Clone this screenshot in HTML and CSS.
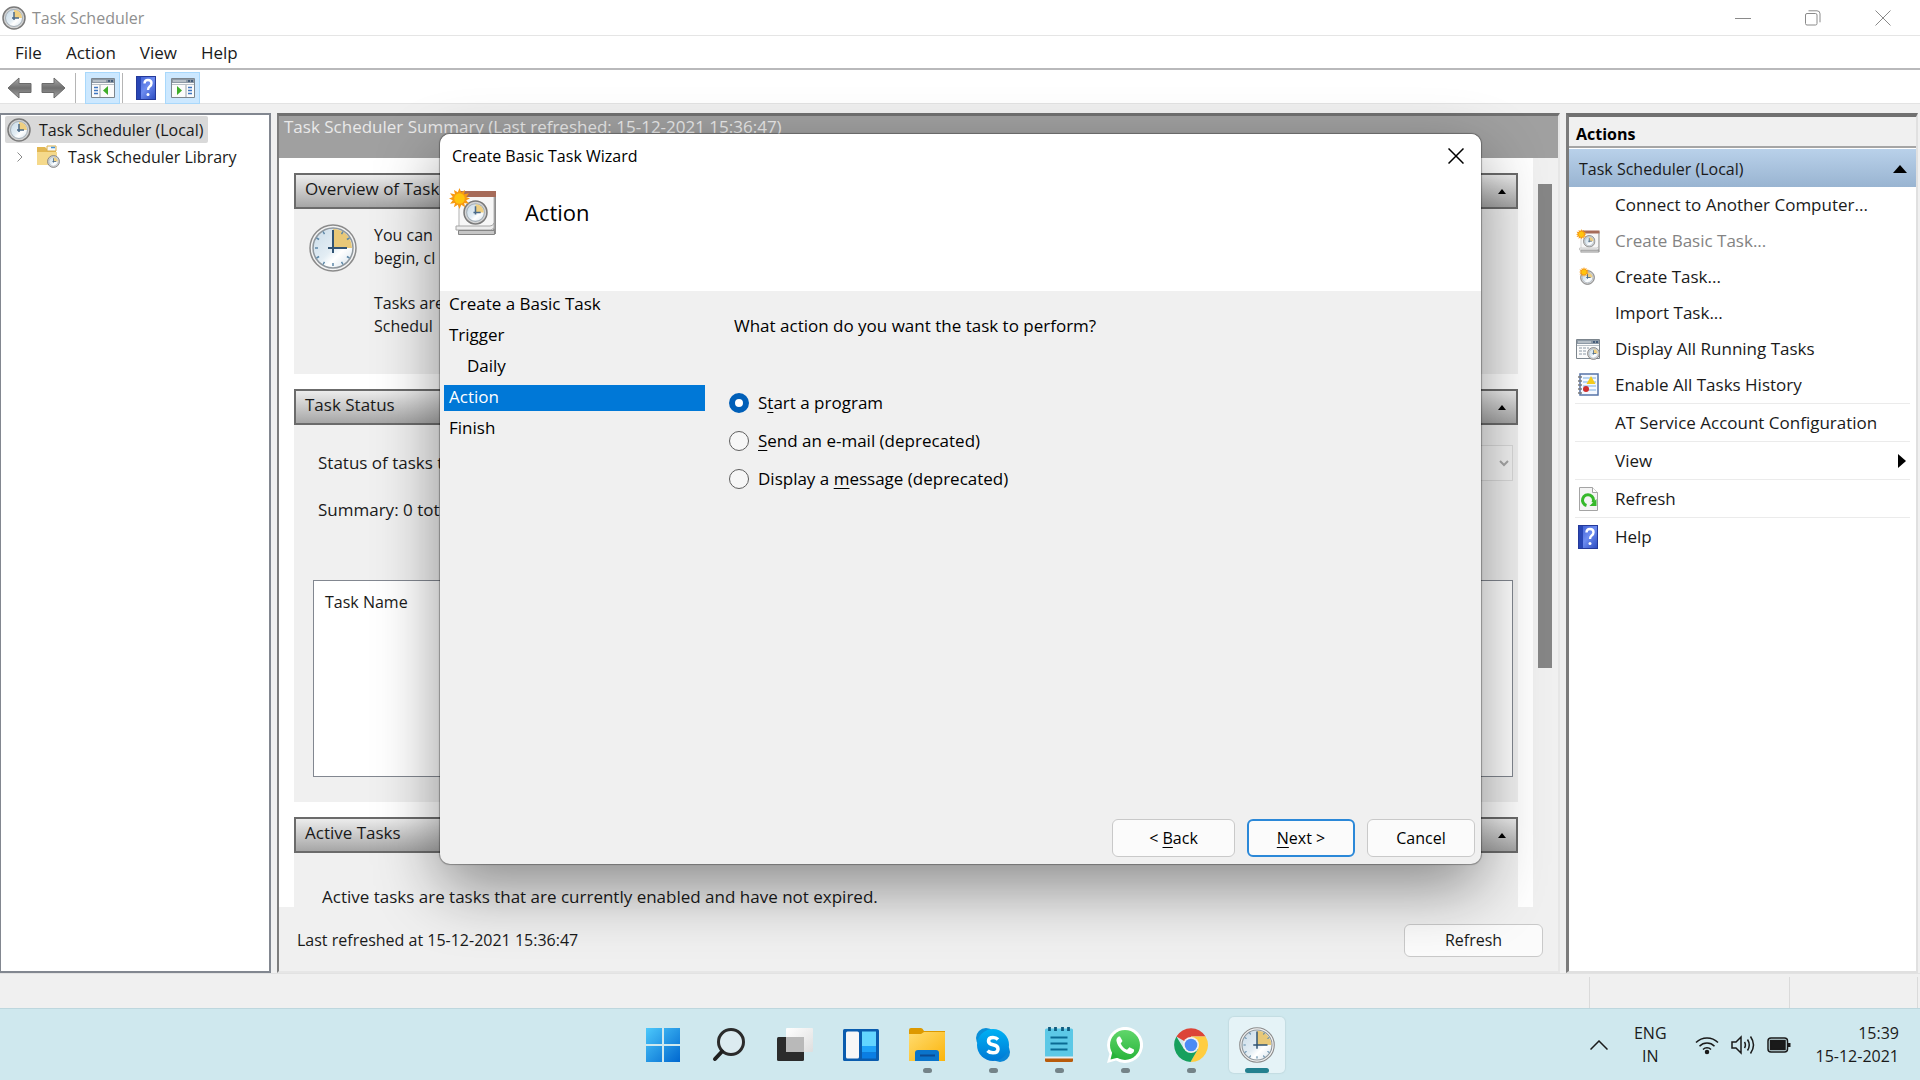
FILE: index.html
```html
<!DOCTYPE html>
<html lang="en">
<head>
    <meta charset="UTF-8">
    <meta name="viewport" content="width=device-width, initial-scale=1.0">
    <title>Task Scheduler</title>
    <link rel="stylesheet" href="styles.css">
</head>
<body>

    <!-- Shared icons -->
    <svg class="sprite" aria-hidden="true">
        <defs>
            <linearGradient id="face" x1="0" y1="0" x2="1" y2="1">
                <stop offset="0" stop-color="#c9dbe8"/>
                <stop offset=".5" stop-color="#e3edf4"/>
                <stop offset=".65" stop-color="#ffffff"/>
                <stop offset="1" stop-color="#d3e1eb"/>
            </linearGradient>
            <linearGradient id="arrowFill" x1="0" y1="0" x2="0" y2="1">
                <stop offset="0" stop-color="#a9a9a9"/>
                <stop offset=".5" stop-color="#6f6f6f"/>
                <stop offset="1" stop-color="#a4a4a4"/>
            </linearGradient>
            <linearGradient id="blueFill" x1="0" y1="0" x2="1" y2="1">
                <stop offset="0" stop-color="#4cc8fb"/>
                <stop offset="1" stop-color="#0067cf"/>
            </linearGradient>
            <linearGradient id="bookFill" x1="0" y1="0" x2="1" y2="1">
                <stop offset="0" stop-color="#3a5bd0"/>
                <stop offset=".5" stop-color="#6d8cf0"/>
                <stop offset="1" stop-color="#2d4ec2"/>
            </linearGradient>
            <linearGradient id="folderFill" x1="0" y1="0" x2="1" y2="1">
                <stop offset="0" stop-color="#ffdc70"/>
                <stop offset="1" stop-color="#fbb40b"/>
            </linearGradient>
            <linearGradient id="skypeFill" x1="0" y1="0" x2="0" y2="1">
                <stop offset="0" stop-color="#00b1f4"/>
                <stop offset="1" stop-color="#0078d4"/>
            </linearGradient>
            <linearGradient id="greenFill" x1="0" y1="0" x2="0" y2="1">
                <stop offset="0" stop-color="#60d66a"/>
                <stop offset="1" stop-color="#28b43b"/>
            </linearGradient>
            <linearGradient id="paneFill" x1="0" y1="0" x2="1" y2="1">
                <stop offset="0" stop-color="#ffffff"/>
                <stop offset="1" stop-color="#dedede"/>
            </linearGradient>
        </defs>
        <symbol id="clock" viewBox="0 0 48 48">
            <circle cx="24" cy="24" r="23" fill="#f4f4f4" stroke="#8b8b8b" stroke-width="1.5"/>
            <circle cx="24" cy="24" r="20" fill="url(#face)" stroke="#8f979d" stroke-width="1.5"/>
            <path d="M24 24V5A19 19 0 0 1 43 24Z" fill="#e8c878"/>
            <g stroke="#5d88a8" stroke-width="1.5">
                <path d="M24 39v3M6 24h3M14 7.500l1.500 2.600M7.500 14l2.600 1.500M7.500 34l2.600-1.500M14 40.500l1.500-2.600M34 40.500l-1.500-2.600M40.500 34l-2.600-1.500M34 7.500l-1.500 2.600M40.500 14l-2.600 1.500"/>
            </g>
            <path d="M24 6v23M19 24h19" stroke="#315474" stroke-width="2"/>
        </symbol>
        <symbol id="clock-small" viewBox="0 0 24 24">
            <circle cx="12" cy="12" r="11" fill="#d4d4d4" stroke="#7a7a7a" stroke-width="1.500"/>
            <circle cx="12" cy="12" r="8.500" fill="url(#face)" stroke="#a3aeb7"/>
            <path d="M12 12V4a8 8 0 0 1 8 8Z" fill="#efcf80"/>
            <path d="M12 6v8M10 12h7" stroke="#4a6a88" stroke-width="1.500"/>
        </symbol>
        <symbol id="sun" viewBox="0 0 20 20">
            <path d="M10 0l1.600 4 3.700-2.200-1 4.100L19 5l-2.600 3.600L20 10l-3.600 1.600L19 15l-4.600-.8 1 4.200-3.700-2.400L10 20l-1.600-4-3.700 2.400 1-4.200L1 15l2.600-3.400L0 10l3.600-1.400L1 5l4.700.9-1-4.100L8.400 4Z" fill="#f79a12"/>
            <circle cx="10" cy="10" r="5" fill="#ffc40d"/>
        </symbol>
        <symbol id="wizard" viewBox="0 0 48 48">
            <path d="M10 5h37v41H10Z" fill="#8d8d8d"/>
            <path d="M10 4h35v36l-2 3H9Z" fill="#f7f7f7"/>
            <path d="M10 3h37v6H10Z" fill="#a66b59"/>
            <path d="M10 4v36M45 9v32" stroke="#b5b5b5"/>
            <path d="M7 38h34q3 0 4-3v5l-3 2H7Z" fill="#ededed" stroke="#a5a5a5"/>
            <path d="M9.500 42.500h36v4h-36Z" fill="#c6c6c6" stroke="#858585"/>
            <use href="#clock-small" x="14" y="12" width="25" height="25"/>
            <use href="#sun" x="0" y="0" width="21" height="21"/>
        </symbol>
        <symbol id="help" viewBox="0 0 20 24">
            <path d="M0 0h20v24H0Z" fill="#24399a"/>
            <path d="M1 1h18v22H1Z" fill="url(#bookFill)"/>
            <path d="M1 1h4v22H1Z" fill="#2846b5"/>
            <path d="M8.500 7.500q0-3.500 3.500-3.500t3.500 3.300q0 1.900-1.800 3.200-1.700 1.200-1.700 3.500" fill="none" stroke="#ffffff" stroke-width="2.400"/>
            <circle cx="12" cy="18.500" r="1.500" fill="#ffffff"/>
        </symbol>
        <symbol id="window" viewBox="0 0 24 20">
            <path d="M.5.5h23v19H.5Z" fill="#fbfbfb" stroke="#7c858d"/>
            <path d="M1 1h22v4H1Z" fill="#8d99a5"/>
            <path d="M2 3h13" stroke="#dfe4e8"/>
            <path d="M17 3h2M20 3h2" stroke="#2f4a6c" stroke-width="1.500"/>
            <path d="M1 6.500h22" stroke="#b8bfc6"/>
        </symbol>
        <symbol id="back" viewBox="0 0 25 22">
            <path d="M1 11 12 1v5.500h12v9H12V21Z" fill="url(#arrowFill)" stroke="#6b6b6b" stroke-linejoin="round"/>
        </symbol>
    </svg>

    <header class="titlebar">
        <svg class="titlebar-icon"><use href="#clock-small"/></svg>
        <h1>Task Scheduler</h1>
        <div class="window-buttons">
            <button aria-label="Minimize"><svg viewBox="0 0 16 16"><path d="M0 8.500h16"/></svg></button>
            <button aria-label="Restore"><svg viewBox="0 0 16 16"><rect x=".5" y="3.500" width="11.500" height="11.500" rx="1.500"/><path d="M3.500.8h8.500a3 3 0 0 1 3 3v8.500"/></svg></button>
            <button aria-label="Close"><svg viewBox="0 0 16 16"><path d="M.5.5l15 15M15.500.5l-15 15"/></svg></button>
        </div>
    </header>

    <nav class="menubar">
        <button>File</button>
        <button>Action</button>
        <button>View</button>
        <button>Help</button>
    </nav>

    <div class="toolbar">
        <button aria-label="Back"><svg class="arrow"><use href="#back"/></svg></button>
        <button aria-label="Forward"><svg class="arrow flip"><use href="#back"/></svg></button>
        <span class="separator"></span>
        <button class="toggled" aria-label="Show or hide console tree">
            <svg viewBox="0 0 24 20" width="24" height="20"><use href="#window"/><path d="M9 7v12" stroke="#9aa3ab"/><path d="M3 9.500h4M3 12.500h4M3 15.500h4" stroke="#3f76c0" stroke-width="1.500"/><path d="M17 8v9l-5-4.500Z" fill="#3fae29"/></svg>
        </button>
        <span class="separator close"></span>
        <button aria-label="Help"><svg class="book"><use href="#help"/></svg></button>
        <button class="toggled" aria-label="Show or hide action pane">
            <svg viewBox="0 0 24 20" width="24" height="20"><use href="#window"/><path d="M15 7v12" stroke="#9aa3ab"/><path d="M17 9.500h4M17 12.500h4M17 15.500h4" stroke="#3f76c0" stroke-width="1.500"/><path d="M6 8v9l5-4.500Z" fill="#3fae29"/></svg>
        </button>
    </div>

    <main class="console">
        <ul class="tree">
            <li class="tree-root"><svg class="icon"><use href="#clock-small"/></svg><span>Task Scheduler (Local)</span></li>
            <li class="tree-child">
                <svg class="chevron" viewBox="0 0 6 10"><path d="M.5.5 5 5 .5 9.500"/></svg>
                <svg class="icon" viewBox="0 0 24 24">
                    <path d="M1 2h8l2 2h9v16H1Z" fill="#e2b752"/>
                    <path d="M11 1h9v5h-9Z" fill="#f8f8f8" stroke="#d9ae4b"/>
                    <path d="M15 2.500h4" stroke="#4192d9" stroke-width="1.500"/>
                    <path d="M1 7h20v13H1Z" fill="#f5d98b"/>
                    <use href="#clock-small" x="11" y="10" width="13" height="13"/>
                </svg>
                <span>Task Scheduler Library</span>
            </li>
        </ul>

        <section class="summary">
            <h2 class="summary-title">Task Scheduler Summary (Last refreshed: 15-12-2021 15:36:47)</h2>
            <div class="scroll-area">
                <div class="groups">
                    <section class="group">
                        <h3>Overview of Task <span class="collapse"></span></h3>
                        <div class="group-body overview">
                            <svg class="large-icon"><use href="#clock"/></svg>
                            <div class="overview-text">
                                <p>You can<br>begin, cl</p>
                                <p>Tasks are<br>Schedul</p>
                            </div>
                        </div>
                    </section>
                    <section class="group">
                        <h3>Task Status <span class="collapse"></span></h3>
                        <div class="group-body status">
                            <div class="status-row">
                                <label for="period">Status of tasks t</label>
                                <select id="period" disabled><option></option></select>
                            </div>
                            <p class="status-summary">Summary: 0 tot</p>
                            <div class="task-list">
                                <table>
                                    <thead><tr><th>Task Name</th></tr></thead>
                                </table>
                            </div>
                        </div>
                    </section>
                    <section class="group">
                        <h3>Active Tasks <span class="collapse"></span></h3>
                        <div class="group-body active-tasks">
                            <p>Active tasks are tasks that are currently enabled and have not expired.</p>
                        </div>
                    </section>
                </div>
                <div class="scrollbar"><div class="thumb"></div></div>
            </div>
            <footer class="summary-footer">
                <span>Last refreshed at 15-12-2021 15:36:47</span>
                <button class="button">Refresh</button>
            </footer>
        </section>

        <aside class="actions">
            <h2>Actions</h2>
            <h3>Task Scheduler (Local)<svg viewBox="0 0 14 8" width="14" height="8"><path d="M0 8 7 0l7 8Z"/></svg></h3>
            <ul>
                <li><button>Connect to Another Computer...</button></li>
                <li><button disabled><svg class="icon"><use href="#wizard"/></svg>Create Basic Task...</button></li>
                <li><button>
                    <svg class="icon" viewBox="0 0 24 24"><use href="#clock-small" x="4" y="5" width="15" height="15"/><use href="#sun" x="3" y="2" width="10" height="10"/></svg>
                    Create Task...</button></li>
                <li><button>Import Task...</button></li>
                <li><button>
                    <svg class="icon" viewBox="0 0 24 24"><use href="#window" y="2" width="24" height="20"/><path d="M3 11h10M3 14h8M3 17h8" stroke="#8b98a5" stroke-dasharray="3 1"/><use href="#clock-small" x="11" y="10" width="13" height="13"/></svg>
                    Display All Running Tasks</button></li>
                <li><button>
                    <svg class="icon" viewBox="0 0 24 24"><path d="M4 1h18v21H4Z" fill="#f4f8ff" stroke="#5673a8" stroke-width="1.500"/><path d="M7 5h13M7 9h13M7 13h13M7 17h13" stroke="#7eb0e0"/><path d="M2 4h4M2 8h4M2 12h4M2 16h4M2 20h4" stroke="#7b7b7b" stroke-width="1.500"/><path d="M15 3l4.500 8h-9Z" fill="#f4cb1b"/><circle cx="10" cy="16" r="3" fill="#d02d2d"/></svg>
                    Enable All Tasks History</button></li>
                <li class="ruled"><button>AT Service Account Configuration</button></li>
                <li class="ruled"><button>View<svg class="submenu" viewBox="0 0 8 14"><path d="M0 0l8 7-8 7Z"/></svg></button></li>
                <li class="ruled"><button>
                    <svg class="icon" viewBox="0 0 24 24"><path d="M3.500.5h13l5 5v18h-18Z" fill="#f4f4f4" stroke="#a4a4a4"/><path d="M16.500.5v5h5" fill="#ffffff" stroke="#a4a4a4"/><path d="M10.500 18.500a5.500 5.500 0 1 1 6.500-3" fill="none" stroke="#35b82a" stroke-width="3"/><path d="M20.500 12v7h-7Z" fill="#35b82a"/></svg>
                    Refresh</button></li>
                <li class="ruled"><button><svg class="icon"><use href="#help"/></svg>Help</button></li>
            </ul>
        </aside>
    </main>

    <div class="statusbar"><span></span><span></span><span></span></div>

    <footer class="taskbar">
        <nav class="apps">
            <button aria-label="Start">
                <svg viewBox="0 0 36 36"><path d="M1 1h16v16H1ZM19 1h16v16H19ZM1 19h16v16H1ZM19 19h16v16H19Z" fill="url(#blueFill)"/></svg>
            </button>
            <button aria-label="Search">
                <svg viewBox="0 0 36 36"><circle cx="20" cy="15" r="12.500" fill="#dcebf0" stroke="#2b2b2b" stroke-width="3"/><path d="M11 24.500 4 32" stroke="#1f1f1f" stroke-width="4" stroke-linecap="round"/></svg>
            </button>
            <button aria-label="Task view">
                <svg viewBox="0 0 36 36"><rect y="10" width="27" height="24" rx="1.500" fill="#2b2b2b"/><rect x="9" y="1" width="27" height="24" rx="1" fill="url(#paneFill)"/><path d="M9 10h18v15H9Z" fill="#b9b9b9"/></svg>
            </button>
            <button aria-label="Widgets">
                <svg viewBox="0 0 36 36"><rect y="2" width="36" height="32" rx="1.500" fill="#0a5cae"/><rect x="3" y="4.500" width="13" height="27" rx="1.500" fill="#f7f7f7"/><path d="M19 4.500h14V19H19Z" fill="#63d5ff"/><path d="M19 19h14v6.500H19Z" fill="#1fa2f8"/><path d="M19 25.500h14v6H19Z" fill="#0a7ee4"/></svg>
            </button>
            <button class="running" aria-label="File Explorer">
                <svg viewBox="0 0 36 36"><path d="M0 3q0-2 2-2h10q1.500 0 3 3h21v10H0Z" fill="#dd9900"/><path d="M0 7h12l3-2h21v29H0Z" fill="url(#folderFill)"/><path d="M6 34V26q0-3 3-3h18q3 0 3 3v8Z" fill="#0a74cb"/><path d="M11 28.500h15" stroke="#0b4b92" stroke-width="2"/></svg>
            </button>
            <button class="running" aria-label="Skype">
                <svg viewBox="0 0 36 36"><circle cx="11" cy="11" r="10" fill="#0a8fd8"/><circle cx="25" cy="25" r="10" fill="#0a86d6"/><circle cx="18" cy="18" r="16" fill="url(#skypeFill)"/><path d="M23 12.500q-2-2-5-2-4.500 0-4.500 3.500 0 2.800 4.500 3.800 5 1 5 4.200 0 3.800-5 3.800-3.500 0-5.500-2" fill="none" stroke="#ffffff" stroke-width="3.500"/></svg>
            </button>
            <button class="running" aria-label="Notepad">
                <svg viewBox="0 0 36 36"><path d="M4 30h28v3.500q0 1.500-1.500 1.500h-25Q4 35 4 33.500Z" fill="#b85b0b"/><path d="M4 28h28v3.500H4Z" fill="#ececec"/><path d="M4 3q0-1.500 1.500-1.500h25Q32 1.500 32 3v26.500H4Z" fill="#5cc8e6"/><path d="M9.500 10.500h17M9.500 16.500h17M9.500 22.500h17" stroke="#0a6a93" stroke-width="2"/><path d="M8.500 0v4M14.500 0v4M21.500 0v4M27.500 0v4" stroke="#0f5c80" stroke-width="2.800"/></svg>
            </button>
            <button class="running" aria-label="WhatsApp">
                <svg viewBox="0 0 36 36"><path d="M0 36l2.500-9A18 18 0 1 1 9 33.500Z" fill="#ffffff"/><circle cx="18" cy="18" r="15" fill="url(#greenFill)"/><path d="M3.500 32.500l2-8 6 6Z" fill="#28b43b"/><path d="M13 9.500c-1.500-.5-4 1.500-3.500 4.500 1 6 7 12.500 13.500 13 3 0 4.500-2.500 4-4.500l-4.500-2.300-2.500 2.600c-3-1.200-5-3.300-6.300-6.200l1.800-2.600Z" fill="#ffffff"/></svg>
            </button>
            <button class="running" aria-label="Chrome">
                <svg viewBox="0 0 36 36"><path d="M18 18 3.400 9.500A17 17 0 0 1 32.600 9.500H18Z" fill="#dc4437"/><path d="M18 18V9.500h14.600A17 17 0 0 1 17.500 35L25 22Z" fill="#ffcd40"/><path d="M18 18 25 22 17.500 35A17 17 0 0 1 3.400 9.500L11 22Z" fill="#16a05d"/><circle cx="18" cy="18" r="8" fill="#f1f1f1"/><circle cx="18" cy="18" r="6.300" fill="#4c8bf5"/></svg>
            </button>
            <button class="current" aria-label="Task Scheduler">
                <svg><use href="#clock"/></svg>
            </button>
        </nav>
        <div class="tray">
            <svg class="tray-up" viewBox="0 0 18 10"><path d="M.5 9.500 9 1l8.500 8.500"/></svg>
            <div class="language">ENG<br>IN</div>
            <div class="tray-icons">
                <svg viewBox="0 0 24 24"><path d="M1 9.500a15.500 15.500 0 0 1 22 0M4.500 13.200a10.500 10.500 0 0 1 15 0M8 16.500a5.700 5.700 0 0 1 8 0"/><circle cx="12" cy="19" r="1.500" fill="#1a1a1a"/></svg>
                <svg viewBox="0 0 24 24"><path d="M1 9h4l5-5v16l-5-5H1ZM13.500 9q1.800 3 0 6M16.500 6.500q3.500 5.500 0 11M19.500 3.500q6 8.500 0 17"/></svg>
                <svg viewBox="0 0 24 24"><rect x="1" y="5" width="19.500" height="14" rx="3"/><rect x="3.500" y="7.500" width="14.500" height="9" fill="#1a1a1a"/><path d="M22 10v4" stroke-width="3"/></svg>
            </div>
            <div class="datetime"><time>15:39</time><time>15-12-2021</time></div>
        </div>
    </footer>

    <div class="wizard" role="dialog" aria-labelledby="wizard-title">
        <header class="wizard-header">
            <div class="wizard-titlebar">
                <h2 id="wizard-title">Create Basic Task Wizard</h2>
                <button aria-label="Close wizard"><svg viewBox="0 0 16 16"><path d="M.5.5l15 15M15.500.5l-15 15"/></svg></button>
            </div>
            <div class="wizard-heading">
                <svg class="large-icon"><use href="#wizard"/></svg>
                <h3>Action</h3>
            </div>
        </header>
        <div class="wizard-body">
            <ol class="steps">
                <li>Create a Basic Task</li>
                <li>Trigger</li>
                <li class="substep">Daily</li>
                <li class="selected">Action</li>
                <li>Finish</li>
            </ol>
            <fieldset>
                <legend>What action do you want the task to perform?</legend>
                <div class="option"><input type="radio" id="start" name="action" checked><label for="start">S<u>t</u>art a program</label></div>
                <div class="option"><input type="radio" id="email" name="action"><label for="email"><u>S</u>end an e-mail (deprecated)</label></div>
                <div class="option"><input type="radio" id="message" name="action"><label for="message">Display a <u>m</u>essage (deprecated)</label></div>
            </fieldset>
        </div>
        <footer class="wizard-footer">
            <button class="button back">&lt; <u>B</u>ack</button>
            <button class="button default"><u>N</u>ext &gt;</button>
            <button class="button">Cancel</button>
        </footer>
    </div>

</body>
</html>
```

FILE: styles.css
```css
* {
    box-sizing: border-box;
}

body {
    font-family: "Open Sans", "Noto Sans", sans-serif;
    font-size: 16px;
    line-height: 24px;
    color: #1a1a1a;
    background-color: #f0f0f0;
    margin: 0;
    height: 100vh;
    display: flex;
    flex-direction: column;
    overflow: hidden;
}

h1, h2, h3, p, ul, ol, fieldset {
    margin: 0;
    padding: 0;
    border: none;
    font-size: inherit;
    font-weight: normal;
}

ul, ol {
    list-style: none;
}

button, select {
    font: inherit;
    color: inherit;
    background: none;
    border: none;
    padding: 0;
}

u {
    text-underline-offset: 3px;
}

svg {
    display: block;
    flex: none;
}

.sprite {
    position: absolute;
    width: 0;
    height: 0;
}

.icon {
    width: 24px;
    height: 24px;
}

.large-icon {
    width: 48px;
    height: 48px;
}

/* Title bar and menus */
.titlebar {
    display: flex;
    align-items: center;
    gap: 6px;
    height: 36px;
    padding: 0 14px 0 2px;
    background-color: white;
    border-bottom: 1px solid #e5e5e5;
    color: #8f8f8f;
}

.titlebar-icon {
    width: 24px;
    height: 24px;
}

.window-buttons {
    display: flex;
    gap: 24px;
    margin-left: auto;
}

.window-buttons button {
    width: 46px;
    display: flex;
    justify-content: center;
}

.window-buttons svg {
    width: 16px;
    height: 16px;
    fill: none;
    stroke: #8a8a8a;
}

.menubar {
    display: flex;
    gap: 24px;
    height: 34px;
    padding: 2px 15px 0;
    font-size: 17px;
    background-color: white;
    border-bottom: 2px solid #b9b9bb;
}

.toolbar {
    display: flex;
    align-items: center;
    gap: 9px;
    height: 34px;
    padding: 2px 0 0 7px;
    background-color: white;
    border-bottom: 1px solid #e3e3e3;
}

.arrow {
    width: 25px;
    height: 22px;
}

.flip {
    transform: scaleX(-1);
}

.book {
    width: 20px;
    height: 24px;
    margin-left: 4px;
}

.separator {
    width: 1px;
    height: 30px;
    background-color: #b5b5b5;
}

.separator.close {
    margin-left: -7px;
}

.toolbar .toggled {
    width: 35px;
    height: 32px;
    display: flex;
    align-items: center;
    justify-content: center;
    background-color: #cce8ff;
    border: 1px solid #a9d8fb;
}

/* Three pane console */
.console {
    flex: 1;
    min-height: 0;
    display: grid;
    grid-template-columns: 271px 1fr 352px;
    grid-template-rows: minmax(0, 1fr);
    gap: 6px;
    padding: 9px 2px 0 0;
}

.tree {
    background-color: white;
    border: 2px solid #828790;
    border-left-width: 1px;
    padding: 1px 4px;
}

.tree-root {
    display: flex;
    align-items: center;
    gap: 8px;
    width: fit-content;
    height: 27px;
    padding: 0 5px 0 2px;
    background-color: #d9d9d9;
    border-radius: 2px;
}

.tree-child {
    display: flex;
    align-items: center;
    height: 28px;
    padding-left: 12px;
}

.chevron {
    width: 6px;
    height: 10px;
    margin-right: 13px;
    fill: none;
    stroke: #8a8a8a;
}

.tree-child .icon {
    margin-right: 8px;
}

.summary {
    min-width: 0;
    display: flex;
    flex-direction: column;
    border: 2px solid #e6e6e6;
    border-top: 3px solid #707070;
    border-left: 2px solid #7c7c7c;
}

.summary-title {
    height: 42px;
    padding-left: 5px;
    line-height: 22px;
    font-size: 17px;
    color: #e9e9e9;
    background-color: #a0a0a0;
}

.scroll-area {
    flex: 1;
    min-height: 0;
    display: flex;
    overflow: hidden;
}

.groups {
    flex: 1;
    min-width: 0;
    display: flex;
    flex-direction: column;
    gap: 15px;
    padding: 15px 15px 0 15px;
    background-color: white;
    white-space: nowrap;
    font-size: 17px;
}

.group h3 {
    display: flex;
    justify-content: space-between;
    height: 36px;
    padding: 1px 10px 0 9px;
    line-height: 26px;
    border: 2px solid #6b6b6b;
    background: linear-gradient(#ececec, #a6a6a6);
}

.collapse {
    align-self: center;
    border: 4px solid transparent;
    border-top: none;
    border-bottom: 5px solid black;
}

.group-body {
    background-color: #f0f0f0;
}

.overview {
    display: flex;
    gap: 17px;
    height: 165px;
    padding: 15px;
}

.overview-text {
    display: flex;
    flex-direction: column;
    gap: 22px;
    line-height: 23px;
    font-size: 16px;
}

.status {
    padding: 20px 5px 25px 19px;
}

.status-row {
    display: flex;
    align-items: center;
    justify-content: space-between;
    padding-left: 5px;
}

.status-row select {
    width: 180px;
    height: 36px;
    padding: 0 8px;
    border: 1px solid #d2d2d2;
    background-color: #f5f5f5;
    color: #8a8a8a;
}

.status-summary {
    margin-top: 17px;
    padding-left: 5px;
}

.task-list {
    height: 197px;
    margin-top: 58px;
    padding: 9px 11px;
    background-color: white;
    border: 1px solid #828790;
    font-size: 16px;
}

.task-list table {
    border-collapse: collapse;
}

.task-list th {
    padding: 0;
    font-weight: normal;
}

.active-tasks {
    padding: 32px 28px;
}

.scrollbar {
    width: 25px;
    padding: 26px 6px 0 5px;
}

.thumb {
    height: 67%;
    background-color: #868686;
}

.summary-footer {
    display: flex;
    align-items: center;
    justify-content: space-between;
    height: 64px;
    padding: 2px 15px 0 18px;
}

.summary-footer .button {
    width: 139px;
    height: 33px;
}

.button {
    background-color: #fbfbfb;
    border: 1px solid #c9c9c9;
    border-radius: 6px;
}

/* Actions pane */
.actions {
    background-color: white;
    border: 2px solid #e0e0e0;
    border-top: 4px solid #707070;
    border-left: 3px solid #7c7c7c;
}

.actions h2 {
    height: 31px;
    padding-left: 7px;
    line-height: 34px;
    font-weight: bold;
    color: black;
    background-color: #f0f0f0;
    border-bottom: 2px solid #a5a5a5;
}

.actions h3 {
    display: flex;
    align-items: center;
    justify-content: space-between;
    height: 38px;
    margin-top: 1px;
    padding: 2px 9px 0 10px;
    background: linear-gradient(#b9d1ea, #99b4d1);
}

.actions li {
    margin: 0 6px;
}

.actions button {
    display: flex;
    align-items: center;
    width: 100%;
    height: 36px;
    padding-left: 40px;
    font-size: 17px;
}

.actions button:disabled {
    color: #838383;
}

.actions .ruled {
    border-top: 1px solid #ebebeb;
}

.actions .ruled button {
    height: 37px;
}

.actions .icon {
    margin: 0 15px 0 -39px;
}

.actions .submenu {
    width: 8px;
    height: 14px;
    margin: 0 4px 0 auto;
}

.statusbar {
    display: flex;
    justify-content: flex-end;
    height: 35px;
    padding: 3px 2px 0;
    border-top: 1px solid #e2e2e2;
}

.statusbar span {
    border-right: 1px solid #dadada;
    width: 200px;
}

.statusbar span:last-child {
    width: 128px;
}

/* Taskbar */
.taskbar {
    display: grid;
    grid-template-columns: 1fr auto 1fr;
    height: 72px;
    background-color: #cfe8ee;
    border-top: 1px solid #bdd7de;
}

.apps {
    grid-column: 2;
    display: flex;
    gap: 10px;
    padding-top: 8px;
}

.apps button {
    position: relative;
    width: 56px;
    height: 56px;
    padding: 0 10px;
    border-radius: 5px;
}

.apps svg {
    width: 36px;
    height: 36px;
}

.apps .current {
    background-color: #e5f3f7;
    box-shadow: 0 0 1px 1px #c3dce2;
}

.running::after, .current::after {
    content: "";
    position: absolute;
    bottom: 0;
    left: 24px;
    width: 9px;
    height: 5px;
    border-radius: 3px;
    background-color: #748388;
}

.current::after {
    left: 16px;
    width: 24px;
    background-color: #23808f;
}

.tray {
    display: flex;
    align-items: center;
    justify-content: flex-end;
    padding: 0 21px 0 0;
    line-height: 23px;
}

.tray-up {
    width: 18px;
    height: 10px;
    fill: none;
    stroke: #1a1a1a;
    stroke-width: 1.5;
}

.language {
    margin: 0 28px 0 26px;
    text-align: center;
}

.tray-icons {
    display: flex;
    gap: 12px;
    margin-right: 25px;
}

.tray-icons svg {
    width: 24px;
    height: 24px;
    fill: none;
    stroke: #1a1a1a;
    stroke-width: 1.5;
}

.datetime {
    display: flex;
    flex-direction: column;
    align-items: flex-end;
}

/* Wizard dialog */
.wizard {
    position: absolute;
    top: 134px;
    left: 50%;
    margin-left: -520px;
    width: 1041px;
    height: 730px;
    display: flex;
    flex-direction: column;
    border-radius: 10px;
    overflow: hidden;
    background-color: #f0f0f0;
    color: black;
    box-shadow: 0 0 1px 1px rgba(0, 0, 0, 0.3), 0 24px 64px rgba(0, 0, 0, 0.42);
}

.wizard-header {
    height: 157px;
    background-color: white;
}

.wizard-titlebar {
    display: flex;
    align-items: center;
    justify-content: space-between;
    height: 44px;
    padding: 0 17px 0 12px;
}

.wizard-titlebar svg {
    width: 16px;
    height: 16px;
    fill: none;
    stroke: black;
    stroke-width: 1.5;
}

.wizard-heading {
    display: flex;
    align-items: center;
    gap: 28px;
    padding: 10px 9px;
}

.wizard-heading h3 {
    font-size: 22px;
}

.wizard-body {
    flex: 1;
    display: grid;
    grid-template-columns: 261px 1fr;
    gap: 24px;
    padding: 0 4px;
    font-size: 17px;
}

.steps {
    padding-top: 1px;
}

.steps li {
    height: 26px;
    margin-bottom: 5px;
    padding-left: 5px;
}

.steps .substep {
    padding-left: 23px;
}

.steps .selected {
    color: white;
    background-color: #0078d7;
}

fieldset {
    min-width: 0;
}

legend {
    padding: 23px 5px 53px;
}

.option {
    display: flex;
    align-items: center;
    gap: 9px;
    height: 24px;
    margin-bottom: 14px;
}

.option input {
    appearance: none;
    width: 20px;
    height: 20px;
    margin: 0;
    border: 1px solid #5f5f5f;
    border-radius: 50%;
    background-color: #f7f7f7;
}

.option input:checked {
    border: 6px solid #005fb8;
    background-color: white;
}

.wizard-footer {
    display: flex;
    justify-content: flex-end;
    gap: 12px;
    padding: 0 6px 7px;
}

.wizard-footer .button {
    width: 108px;
    height: 38px;
}

.wizard-footer .back {
    width: 123px;
}

.wizard-footer .default {
    border: 2px solid #2b88d8;
}
```
